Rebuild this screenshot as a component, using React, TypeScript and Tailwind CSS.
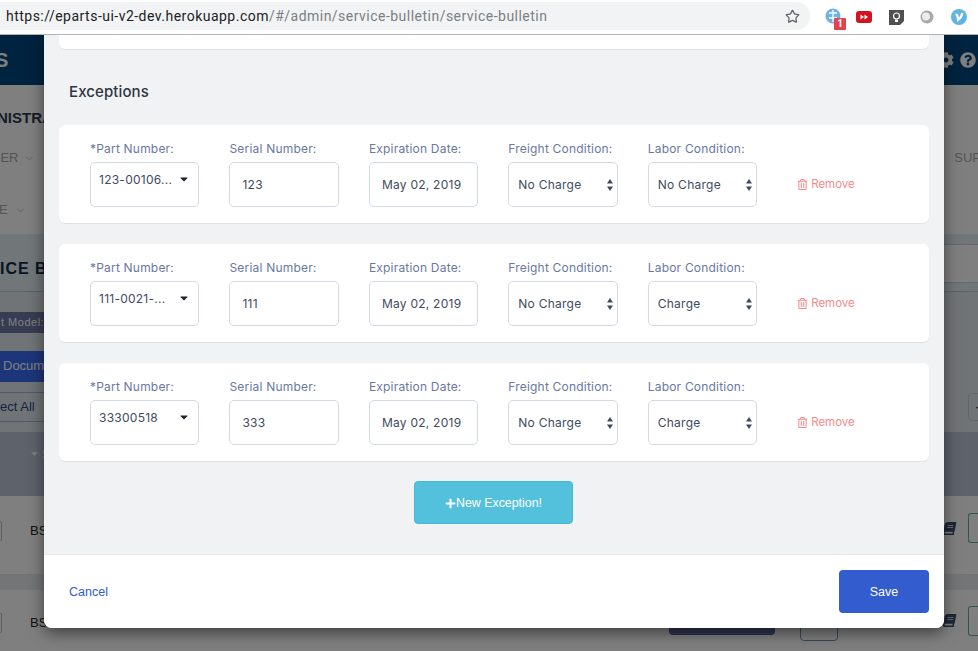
import React from "react";
import { ChevronDown, Star } from "lucide-react";
import { FaBook, FaCaretDown, FaCog, FaPlus, FaQuestionCircle, FaRegTrashAlt } from "react-icons/fa";

type ExceptionRow = { part: string; serial: string; freight: string; labor: string };

const rows: ExceptionRow[] = [
  { part: "123-00106...", serial: "123", freight: "No Charge", labor: "No Charge" },
  { part: "111-0021-...", serial: "111", freight: "No Charge", labor: "Charge" },
  { part: "33300518", serial: "333", freight: "No Charge", labor: "Charge" },
];

const fieldBox = "h-[45px] w-full rounded-[5px] border border-[#d3d9e8] bg-white text-[12px] tracking-[0.25px] text-[#3e4b5f]";

// Small labelled wrapper used by every column of the exception card
const Field = ({ label, children }: { label: string; children: React.ReactNode }) => (
  <div className="flex flex-col">
    <label className="mb-[6px] h-[14px] text-[12px] leading-[14px] tracking-[0.2px] whitespace-nowrap text-[#6a78a0]">{label}</label>
    {children}
  </div>
);

const ChargeSelect = ({ value }: { value: string }) => (
  <div className={`${fieldBox} flex items-center justify-between pr-[4px] pl-[9px]`}>
    <span>{value}</span>
    <svg width="6" height="12" viewBox="0 0 6 12" className="text-[#3e4b5f]">
      <path d="M3 0 6 4.500H0zM3 12 0 7.500h6z" fill="currentColor" />
    </svg>
  </div>
);

const ExceptionCard = ({ row }: { row: ExceptionRow }) => (
  <div className="flex h-[98px] items-start rounded-[6px] bg-white pt-[17px] pl-[31px] shadow-[0_1px_1px_rgba(0,0,0,0.07)]">
    <div className="grid grid-cols-[repeat(5,109.45px)] gap-x-[30px]">
      <Field label="*Part Number:">
        <div className={`${fieldBox} flex items-start justify-between pt-[8px] pr-[8px] pl-[8px]`}>
          <span>{row.part}</span>
          <FaCaretDown className="mt-[2px] text-[12px] text-[#1d2430]" />
        </div>
      </Field>
      <Field label="Serial Number:">
        <input readOnly value={row.serial} className={`${fieldBox} px-[12px] outline-none`} />
      </Field>
      <Field label="Expiration Date:">
        <input readOnly value="May 02, 2019" className={`${fieldBox} px-[12px] outline-none`} />
      </Field>
      <Field label="Freight Condition:">
        <ChargeSelect value={row.freight} />
      </Field>
      <Field label="Labor Condition:">
        <ChargeSelect value={row.labor} />
      </Field>
    </div>
    <button className="mt-[34px] ml-[40px] flex items-center gap-[3px] text-[11.5px] text-[#f58b8b]">
      <FaRegTrashAlt className="text-[11px]" />
      Remove
    </button>
  </div>
);

// Toolbar of the browser window with its extension icons
const BrowserBar = () => (
  <div className="flex h-[35px] items-start border-b border-[#b4b4b4] bg-white pt-[2px] font-['Roboto',sans-serif]">
    <div className="flex h-[28px] w-[810px] items-center justify-between rounded-r-full bg-[#f1f3f4] pr-[10px] pl-[6px] text-[14px] tracking-[0.48px]">
      <span>
        <span className="text-[#202124]">https://eparts-ui-v2-dev.herokuapp.com</span>
        <span className="text-[#7b7f85]">/#/admin/service-bulletin/service-bulletin</span>
      </span>
      <Star size={15} strokeWidth={2} className="text-[#5f6368]" />
    </div>
    <div className="ml-[13px] flex items-center">
      <div className="relative h-[28px] w-[32px]">
        <svg width="16" height="16" viewBox="0 0 16 16" className="mt-[6px] ml-[2px]">
          <circle cx="8" cy="8" r="7.5" fill="#6db3ea" />
          <path d="M8 2v12M4 5h8M4 10h8" stroke="#fff" strokeWidth="1.3" fill="none" />
        </svg>
        <span className="absolute top-[16px] left-[11px] flex h-[12px] w-[12px] items-center justify-center rounded-[1px] bg-[#e2434e] text-[10px] leading-none font-bold text-white">1</span>
      </div>
      <svg width="16" height="12" viewBox="0 0 16 12" className="mt-[2px] ml-[1px]">
        <rect width="16" height="12" rx="3" fill="#d3121f" />
        <path d="M4.5 3.5 8 6l-3.500 2.500zM8.500 3.500 12 6 8.500 8.500z" fill="#fff" />
      </svg>
      <svg width="15" height="15" viewBox="0 0 15 15" className="mt-[2px] ml-[17px]">
        <path d="M0 0h15v11l-4 4H0z" fill="#505050" />
        <circle cx="7.500" cy="6" r="3" fill="none" stroke="#fff" strokeWidth="1.200" />
        <path d="M6 9.500h3V12H6z" fill="#fff" />
      </svg>
      <svg width="14" height="14" viewBox="0 0 14 14" className="mt-[2px] ml-[16px]">
        <circle cx="7" cy="7" r="6.500" fill="#a8a8a8" />
        <circle cx="6" cy="6.500" r="4" fill="#ececec" />
      </svg>
      <svg width="16" height="16" viewBox="0 0 16 16" className="mt-[2px] ml-[17px]">
        <circle cx="8" cy="8" r="8" fill="#62b3e6" />
        <path d="M4.500 5.500c2 0 2 .5 2.500 5.500 2.500-2 4-4.500 4.300-7" fill="none" stroke="#fff" strokeWidth="2.200" />
      </svg>
    </div>
  </div>
);

// The page that lies behind the dialog; most of it is hidden by the modal
const BackgroundPage = () => (
  <div className="font-['Liberation_Sans',sans-serif]">
    <div className="flex h-[50px] items-center justify-between bg-[#00467f] pr-[2px] text-white">
      <span className="-ml-[5px] text-[20px] font-bold">S</span>
      <div className="flex items-center gap-[6px] text-[16px] text-[#ffffff]">
        <FaCog />
        <FaQuestionCircle />
      </div>
    </div>
    <div className="flex h-[149px] justify-between bg-white">
      <div className="flex flex-col">
        <span className="mt-[24px] -ml-[3px] text-[15px] leading-[18px] font-bold text-[#2b3b50]">NISTRA</span>
        <span className="mt-[23px] -ml-[9px] flex items-center gap-[6px] text-[13px] leading-[16px] text-[#a8a8a8]">NER<ChevronDown size={11} strokeWidth={1.5} /></span>
        <span className="mt-[36px] -ml-[1px] flex items-center gap-[7px] text-[13px] leading-[16px] text-[#a8a8a8]">E<ChevronDown size={11} strokeWidth={1.5} /></span>
      </div>
      <span className="mt-[65px] -mr-[3px] text-[13px] leading-[16px] text-[#a8a8a8]">SUP</span>
    </div>
    <div className="flex h-[58px] items-start justify-between border-b border-[#b9c6d0] bg-[#e3edf3]">
      <span className="mt-[25px] text-[16px] leading-[20px] font-bold tracking-[1px] text-[#0f2a44]">ICE BU</span>
      <div className="mt-[10px] h-[39px] w-[34px] border-y border-[#c4d0d8] bg-white" />
    </div>
    <div className="flex h-[140px] flex-col justify-start bg-[#e3e9ed]">
      <div className="mt-[20px] flex h-[21px] w-[44px] items-center overflow-hidden bg-[#6e78a4] pl-[1px] text-[11px] tracking-[0.5px] whitespace-nowrap text-white">t Model:</div>
      <div className="mt-[18px] h-[31px] w-[44px] overflow-hidden bg-[#3a6cf5] pl-[3px] text-[13px] leading-[29px] whitespace-nowrap text-white">Docume</div>
      <div className="mt-[10px] flex items-center justify-between">
        <div className="h-[30px] w-[44px] overflow-hidden border-y border-[#9eb6e0] text-[13px] leading-[28px] whitespace-nowrap text-[#274a86]">ect All</div>
        <div className="-mr-[10px] flex h-[28px] w-[20px] items-center justify-center rounded-[4px] border border-[#c5cbd0] text-[#555]">-</div>
      </div>
    </div>
    <div className="flex h-[64px] items-start justify-start bg-[#bcc6d6] pt-[16px] pl-[29px] text-[12px] leading-[14px] text-white">
      <FaCaretDown className="text-[11px]" />
      <span className="ml-[2px]">S</span>
    </div>
    <div className="flex h-[79px] items-start justify-between border-b border-[#e8e8e8] bg-white">
      <div className="mt-[25px] flex items-center">
        <div className="h-[20px] w-[2px] rounded-r-[2px] border-y border-r border-[#bbb]" />
        <span className="ml-[28px] text-[13px] text-[#222]">BS</span>
      </div>
      <div className="mt-[17px] flex items-center">
        <FaBook className="-skew-x-12 text-[13px] text-[#3c4f6c]" />
        <div className="ml-[12px] h-[30px] w-[10px] rounded-l-[3px] border-y border-l border-[#6fb18b]" />
      </div>
    </div>
    <div className="h-[15px] bg-[#e6ecef]" />
    <div className="flex h-[61px] items-start justify-between bg-white">
      <div className="mt-[23px] flex items-center">
        <div className="h-[20px] w-[2px] rounded-r-[2px] border-y border-r border-[#bbb]" />
        <span className="ml-[28px] text-[13px] text-[#222]">BS</span>
      </div>
      <div className="mt-[16px] flex items-start">
        <div className="-mt-[2px] h-[31px] w-[106px] rounded-[4px] bg-[#5c6a9a]" />
        <div className="-mt-[2px] ml-[25px] h-[37px] w-[38px] rounded-[4px] border border-[#6f90bd]" />
        <FaBook className="mt-[8px] ml-[105px] -skew-x-12 text-[13px] text-[#3c4f6c]" />
        <div className="ml-[12px] h-[30px] w-[10px] rounded-l-[3px] border-y border-l border-[#6fb18b]" />
      </div>
    </div>
  </div>
);

const App: React.FC = () => {
  return (
    <div className="h-[651px] w-[978px] overflow-hidden bg-white">
      <BrowserBar />
      <div className="relative h-[616px] overflow-hidden">
        <BackgroundPage />
        <div className="absolute inset-0 bg-black/50" />
        {/* Modal */}
        <div className="absolute top-0 left-[44px] flex h-[593px] w-[900px] flex-col overflow-hidden rounded-b-[8px] bg-[#f1f2f4] font-['Inter',sans-serif] shadow-[0_5px_15px_rgba(0,0,0,0.5)]">
          <div className="flex-1 px-[15px]">
            <div className="h-[14px] rounded-b-[6px] bg-white shadow-[0_1px_1px_rgba(0,0,0,0.07)]" />
            <h3 className="mt-[33px] ml-[10px] text-[15px] leading-[20px] font-medium tracking-[0.1px] text-[#2e3642]">Exceptions</h3>
            <div className="mt-[23px] flex flex-col gap-[21px]">
              {rows.map((row) => (
                <ExceptionCard key={row.serial} row={row} />
              ))}
            </div>
            <div className="mt-[20px] flex justify-center pr-[1px]">
              <button className="flex h-[43px] w-[159px] items-center justify-center rounded-[4px] border border-[#46b8da] bg-[#53c0dc] pt-[1px] font-['Liberation_Sans',sans-serif] text-[12.4px] text-white">
                <FaPlus className="text-[11px]" />
                New Exception!
              </button>
            </div>
          </div>
          <div className="flex h-[74px] items-center justify-between border-t border-[#e3e5e9] bg-white pr-[15px] pl-[25px] font-['Liberation_Sans',sans-serif]">
            <button className="pt-[1px] text-[12.5px] text-[#2f5bd0]">Cancel</button>
            <button className="h-[43px] w-[90px] rounded-[4px] bg-[#335ccf] pt-[1px] text-[12.5px] text-white">Save</button>
          </div>
        </div>
      </div>
    </div>
  );
};

export default App;
